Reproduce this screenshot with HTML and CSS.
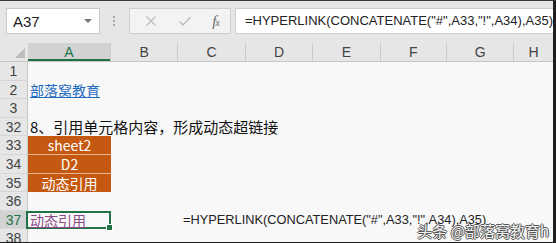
FILE: index.html
```html
<!DOCTYPE HTML>
<html lang="zh">
<head>
<meta charset="utf-8">
<title>HYPERLINK</title>
<link rel="stylesheet" href="styles.css">
</head>
<body>
<div class="frame">
 <!-- Name box and formula bar -->
 <div class="toolbar">
  <div class="namebox"><span>A37</span><span class="caret"></span></div>
  <div class="grip"><i></i><i></i><i></i></div>
  <div class="fbtns">
   <svg class="icon" width="12" height="12" viewBox="0 0 12 12"><path d="M1.5 1.5 L10.5 10.5 M10.5 1.5 L1.5 10.5" stroke="#bdbdbd" stroke-width="1.3" fill="none"/></svg>
   <svg class="icon" width="14" height="12" viewBox="0 0 14 12"><path d="M1.5 6.5 L5 10 L12.5 2" stroke="#bdbdbd" stroke-width="1.4" fill="none"/></svg>
   <span class="fx">f<sub>x</sub></span>
  </div>
  <div class="fbar">=HYPERLINK(CONCATENATE("#",A33,"!",A34),A35)</div>
 </div>
 <!-- Worksheet -->
 <div class="sheet">
  <div class="row colhead">
   <div class="corner"><span></span></div>
   <div class="ch a sel">A</div>
   <div class="ch b">B</div>
   <div class="ch c">C</div>
   <div class="ch d">D</div>
   <div class="ch e">E</div>
   <div class="ch f">F</div>
   <div class="ch g">G</div>
   <div class="ch h">H</div>
  </div>
  <div class="row"><div class="rh">1</div></div>
  <div class="row"><div class="rh">2</div><div class="cell a"><span class="link">部落窝教育</span></div></div>
  <div class="row"><div class="rh">3</div></div>
  <div class="row"><div class="rh">32</div><div class="cell a title">8、引用单元格内容，形成动态超链接</div></div>
  <div class="row"><div class="rh">33</div><div class="cell a orange">sheet2</div></div>
  <div class="row"><div class="rh">34</div><div class="cell a orange">D2</div></div>
  <div class="row"><div class="rh">35</div><div class="cell a orange last">动态引用</div></div>
  <div class="row"><div class="rh">36</div></div>
  <div class="row"><div class="rh sel">37</div><div class="cell a active"><span class="link visited">动态引用</span></div><div class="cell b"></div><div class="cell c formula">=HYPERLINK(CONCATENATE("#",A33,"!",A34),A35)</div></div>
  <div class="row"><div class="rh">38</div></div>
 </div>
 <div class="watermark">头条 @部落窝教育h</div>
</div>
</body>
</html>
```

FILE: styles.css
```css
body {
  margin: 0;
  padding: 0;
}
/* Outer screenshot frame */
.frame {
  position: relative;
  width: 553px;
  height: 241px;
  overflow: hidden;
  border-top: 1px solid #3a3a3a;
  border-right: 3px solid #1e1e1e;
  border-bottom: 2px solid #1e1e1e;
  background: #f8f8f8;
  font-family: "Liberation Sans", "Noto Sans CJK SC", sans-serif;
}
/* Top bar */
.toolbar {
  height: 42px;
  display: flex;
  align-items: flex-start;
  padding-top: 7px;
  box-sizing: border-box;
  background: #e6e6e6;
}
.namebox {
  margin-left: 6px;
  width: 95px;
  height: 26px;
  box-sizing: border-box;
  border: 1px solid #c8c8c8;
  background: #fff;
  display: flex;
  align-items: center;
  justify-content: space-between;
  padding: 0 7px 0 6px;
  font-size: 15px;
  color: #222;
}
.caret {
  width: 0;
  height: 0;
  border-left: 4px solid transparent;
  border-right: 4px solid transparent;
  border-top: 4px solid #777;
}
.grip {
  width: 29px;
  height: 26px;
  display: flex;
  flex-direction: column;
  align-items: center;
  justify-content: center;
  gap: 2px;
}
.grip i {
  width: 2px;
  height: 2px;
  background: #a8a8a8;
}
.fbtns {
  width: 103px;
  height: 26px;
  box-sizing: border-box;
  border: 1px solid #cfcfcf;
  background: #f3f3f3;
  display: flex;
  align-items: center;
  padding: 0 10px 0 15px;
  justify-content: space-between;
}
.fx {
  font-family: "Liberation Serif", serif;
  font-style: italic;
  font-size: 15px;
  color: #666;
  line-height: 1;
}
.fx sub {
  font-size: 10px;
  vertical-align: 0;
  margin-left: -1px;
}
.fbar {
  margin-left: 4px;
  flex: 1;
  height: 26px;
  box-sizing: border-box;
  border: 1px solid #cfcfcf;
  border-right: none;
  background: #fff;
  padding-left: 9px;
  font-size: 13px;
  line-height: 24px;
  color: #222;
  white-space: nowrap;
}
/* Grid */
.row {
  display: flex;
  height: 18.6px;
}
.colhead {
  height: 19px;
  background: #e6e6e6;
  border-bottom: 1px solid #c6c6c6;
  box-sizing: border-box;
}
.corner {
  width: 28px;
  display: flex;
  align-items: flex-end;
  justify-content: flex-end;
  padding: 0 3px 3px 0;
  box-sizing: border-box;
}
.corner span {
  width: 0;
  height: 0;
  border-left: 10px solid transparent;
  border-bottom: 10px solid #bcbcbc;
}
.ch {
  text-align: center;
  font-size: 14px;
  line-height: 18px;
  color: #444;
  box-sizing: border-box;
  border-left: 1px solid #cacaca;
}
.ch.sel {
  background: #d2d2d2;
  color: #217346;
  border-bottom: 2px solid #217346;
  border-left: none;
}
.a { width: 83px; }
.b { width: 68px; }
.c { width: 68px; }
.d { width: 68px; }
.e { width: 68px; }
.f { width: 67px; }
.g { width: 68px; }
.h { width: 40px; }
.rh {
  width: 28px;
  flex: none;
  background: #e6e6e6;
  border-bottom: 1px solid #d6d6d6;
  border-right: 1px solid #c6c6c6;
  box-sizing: border-box;
  text-align: center;
  font-size: 14px;
  line-height: 18px;
  color: #444;
}
.rh.sel {
  background: #d2d2d2;
  color: #217346;
}
.cell {
  flex: none;
  box-sizing: border-box;
  white-space: nowrap;
  overflow: visible;
  padding-left: 2px;
  font-size: 14px;
  line-height: 18px;
  color: #111;
}
.link {
  color: #1f6cc0;
  text-decoration: underline;
  font-family: "Noto Sans CJK SC", sans-serif;
  font-size: 14px;
}
.link.visited {
  color: #8b4a8a;
}
.title {
  font-family: "Noto Sans CJK SC", sans-serif;
  font-size: 15px;
}
/* Orange filled cells */
.orange {
  background: #c65911;
  color: #fff;
  text-align: center;
  padding: 0;
  border-bottom: 1px solid #e9b48f;
  font-family: "Noto Sans CJK SC", "Liberation Sans", sans-serif;
}
.orange.last {
  border-bottom: none;
}
/* Selected cell */
.active {
  position: relative;
  margin-left: -2px;
  width: 85px;
  border: 2px solid #217346;
  padding-left: 2px;
  line-height: 14px;
}
.active::after {
  content: "";
  position: absolute;
  right: -4px;
  bottom: -4px;
  width: 5px;
  height: 5px;
  background: #217346;
  border: 1px solid #fff;
}
.formula {
  padding-left: 4px;
  font-size: 12.8px;
  color: #222;
}
/* Watermark over the bottom right */
.watermark {
  position: absolute;
  right: 4px;
  bottom: 1px;
  font-family: "Noto Sans CJK SC", sans-serif;
  font-size: 15px;
  color: #f2f2f2;
  text-shadow: 1px 0 0 #555, -1px 0 0 #555, 0 1px 0 #555, 0 -1px 0 #555;
  white-space: nowrap;
}
```
